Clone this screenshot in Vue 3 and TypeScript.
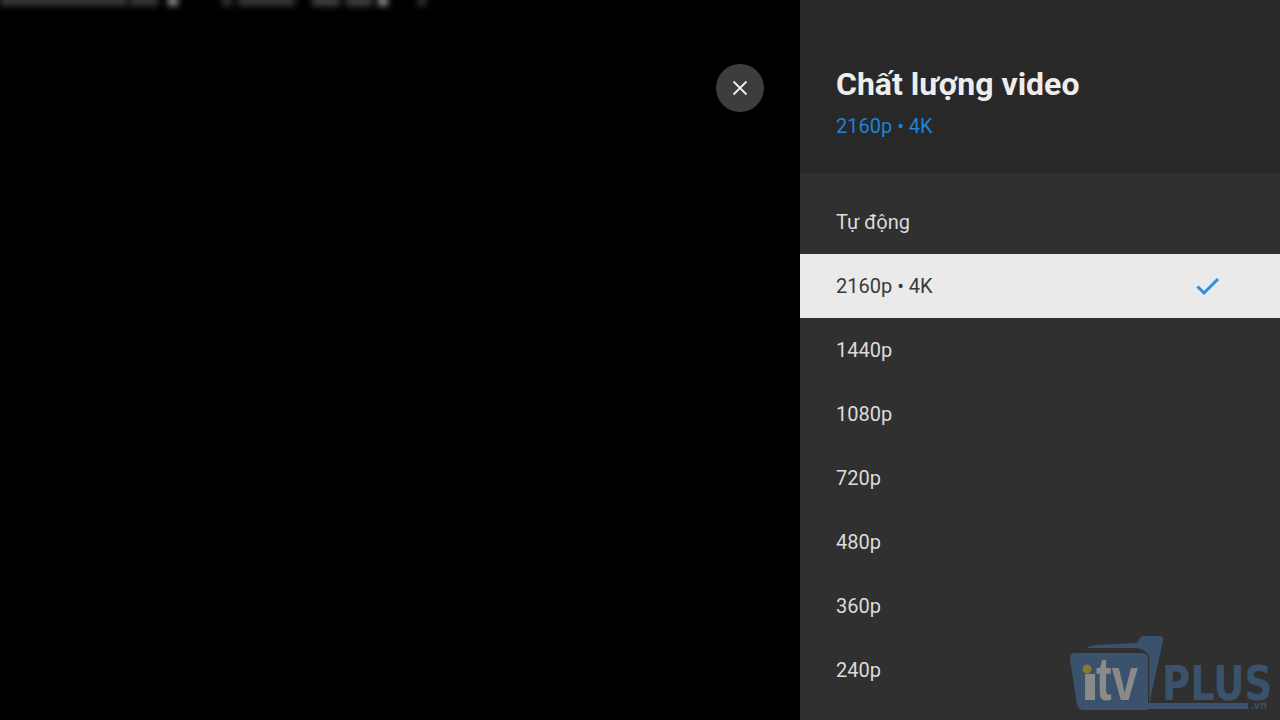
<script setup lang="ts">
import { ref } from 'vue';

const qualities = ['Tự động', '2160p • 4K', '1440p', '1080p', '720p', '480p', '360p', '240p'];
const selected = ref('2160p • 4K');

// blurred caption strip left over at the top of the video
const smudges = [
  { width: 127, gap: 3, color: '#383838' },
  { width: 28, gap: 10, color: '#383838' },
  { width: 10, gap: 44, color: '#888' },
  { width: 10, gap: 6, color: '#333' },
  { width: 57, gap: 17, color: '#383838' },
  { width: 28, gap: 6, color: '#404040' },
  { width: 26, gap: 6, color: '#404040' },
  { width: 10, gap: 30, color: '#888' },
  { width: 8, gap: 0, color: '#333' },
];
</script>

<template>
  <div class="screen">
    <main class="video">
      <div class="smudges">
        <span
          v-for="(s, i) in smudges"
          :key="i"
          class="smudge"
          :style="{ width: s.width + 'px', marginRight: s.gap + 'px', background: s.color }"
        ></span>
      </div>
      <button class="close" aria-label="Đóng">
        <svg width="24" height="24" viewBox="0 0 24 24">
          <path d="M5.5 5.5l13 13M18.5 5.5l-13 13" stroke="#eee" stroke-width="1.8" fill="none" />
        </svg>
      </button>
    </main>

    <aside class="panel">
      <header class="panel-header">
        <h1 class="title">Chất lượng video</h1>
        <p class="subtitle">{{ selected }}</p>
      </header>
      <ul class="list">
        <li
          v-for="q in qualities"
          :key="q"
          :class="['row', { active: q === selected }]"
          @click="selected = q"
        >
          <span>{{ q }}</span>
          <svg v-if="q === selected" class="check" width="32" height="32" viewBox="0 0 32 32">
            <path d="M5.5 16.5l6.5 6.5L26 9" stroke="#2b8fe6" stroke-width="3" fill="none" />
          </svg>
        </li>
      </ul>
    </aside>

    <svg class="watermark" width="220" height="90" viewBox="0 0 220 90">
      <path d="M27 18Q30 15 36 15L77 13L80 8Q81 6 84 6H99Q104 6 103 11L88 79V30Q88 19 76 18Z" fill="#3a526c" />
      <path class="wm-front" d="M14 23H82Q88 23 88 29V80H24Q18 80 17 74L10 30Q10 23 14 23Z" />
      <circle cx="27" cy="39" r="4.5" fill="#8a7a30" />
      <text class="wm-i" transform="translate(20 70) scale(1.5 1)">ı</text>
      <text class="wm-tv" transform="translate(36 70) scale(0.76 1)">tv</text>
      <text class="wm-plus" transform="translate(102 70) scale(1.1 1.37)">PLUS</text>
      <rect x="88" y="73" width="100" height="6" fill="#3a526c" />
      <text class="wm-vn" x="191" y="79">.vn</text>
    </svg>
  </div>
</template>

<style scoped>
.screen {
  position: relative;
  display: flex;
  width: 1280px;
  height: 720px;
  overflow: hidden;
  background: #000;
  font-family: Roboto, "Noto Sans", sans-serif;
}

.video {
  position: relative;
  flex: 1;
  display: flex;
  justify-content: flex-end;
  align-items: flex-start;
  padding: 64px 36px 0 0;
}

.smudges {
  position: absolute;
  top: -4px;
  left: 0;
  display: flex;
  filter: blur(3px);
}

.smudge {
  height: 10px;
}

.close {
  display: flex;
  align-items: center;
  justify-content: center;
  width: 48px;
  height: 48px;
  padding: 0;
  border: none;
  border-radius: 50%;
  background: #3d3d3d;
  cursor: pointer;
}

.panel {
  display: flex;
  flex-direction: column;
  width: 480px;
  background: #303030;
}

.panel-header {
  height: 174px;
  padding: 64px 36px 0;
  box-sizing: border-box;
  background: #282828;
}

.title {
  margin: 0;
  font-size: 32px;
  line-height: 40px;
  font-weight: 700;
  color: #ededed;
}

.subtitle {
  margin: 8px 0 0;
  font-size: 20px;
  line-height: 28px;
  color: #1f82d6;
}

.list {
  margin: 0;
  padding: 16px 0 0;
  list-style: none;
}

.row {
  display: flex;
  align-items: center;
  justify-content: space-between;
  height: 64px;
  padding: 0 56px 0 36px;
  font-size: 20px;
  color: #dcdcdc;
  cursor: pointer;
}

.row.active {
  background: #eaeaea;
  color: #3a3a3a;
}

.watermark {
  position: absolute;
  right: 0;
  bottom: 0;
  pointer-events: none;
}

.wm-front {
  fill: #3a526c;
  stroke: #303030;
  stroke-width: 2.5;
  paint-order: stroke;
}

.wm-i {
  font-family: "Liberation Sans", sans-serif;
  font-weight: 700;
  font-size: 48px;
  fill: #8a8a8a;
}

.wm-tv {
  font-family: "Liberation Sans", sans-serif;
  font-weight: 700;
  font-size: 62px;
  fill: #8a8a8a;
}

.wm-plus {
  font-family: "DejaVu Sans", sans-serif;
  font-weight: 700;
  font-size: 35px;
  fill: #3a526c;
}

.wm-vn {
  font-family: "Liberation Sans", sans-serif;
  font-weight: 700;
  font-size: 11px;
  fill: #3a526c;
}
</style>
